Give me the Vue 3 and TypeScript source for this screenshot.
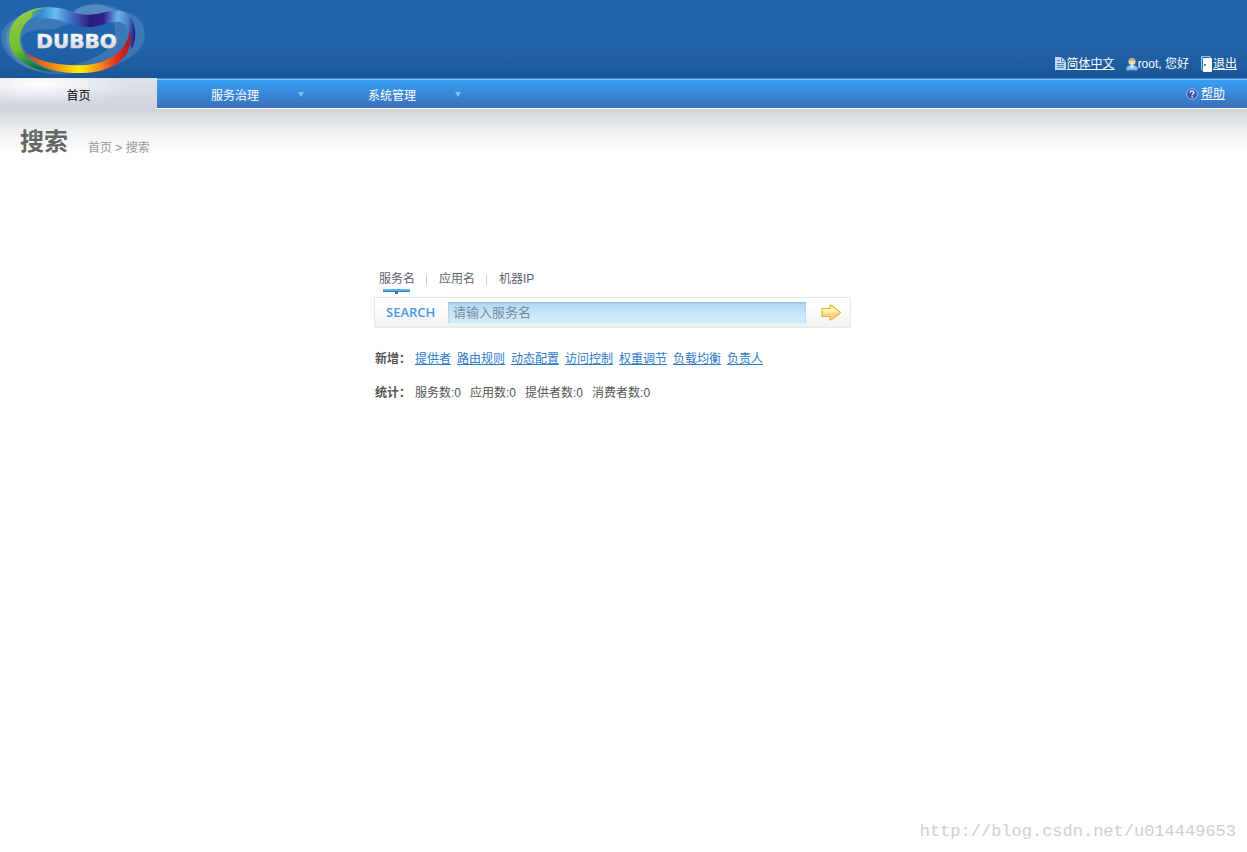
<script setup lang="ts">
import { computed, ref } from 'vue'

interface SearchTab {
  key: string
  label: string
}

const tabs: SearchTab[] = [
  { key: 'service', label: '服务名' },
  { key: 'application', label: '应用名' },
  { key: 'address', label: '机器IP' },
]
const activeTab = ref<string>('service')
const keyword = ref<string>('')
const placeholder = computed(() => '请输入' + (tabs.find((t) => t.key === activeTab.value)?.label ?? ''))

const menus: string[] = ['服务治理', '系统管理']
const addLinks: string[] = ['提供者', '路由规则', '动态配置', '访问控制', '权重调节', '负载均衡', '负责人']
const stats = [
  { label: '服务数', value: 0 },
  { label: '应用数', value: 0 },
  { label: '提供者数', value: 0 },
  { label: '消费者数', value: 0 },
]
</script>

<template>
  <div class="page">
    <header class="banner">
      <a class="logo" href="#" aria-label="DUBBO">
        <svg viewBox="0 0 450 234" width="150" height="78">
          <defs>
            <linearGradient id="green" x1="0.2" y1="0" x2="0.5" y2="1">
              <stop offset="0" stop-color="#a5d884" />
              <stop offset="0.2" stop-color="#86c843" />
              <stop offset="0.6" stop-color="#72bf2c" />
              <stop offset="0.82" stop-color="#2c9140" />
              <stop offset="1" stop-color="#0b6a35" />
            </linearGradient>
            <linearGradient id="blue" gradientUnits="userSpaceOnUse" x1="85" y1="40" x2="406" y2="70">
              <stop offset="0" stop-color="#1c78b8" stop-opacity="0.2" />
              <stop offset="0.12" stop-color="#2e8fd0" />
              <stop offset="0.25" stop-color="#6cbcf0" />
              <stop offset="0.4" stop-color="#3b6fc4" />
              <stop offset="0.58" stop-color="#2b1c80" />
              <stop offset="0.7" stop-color="#2b2388" />
              <stop offset="0.83" stop-color="#68b4ec" />
              <stop offset="0.93" stop-color="#4a82cf" />
              <stop offset="1" stop-color="#2a1c86" />
            </linearGradient>
            <linearGradient id="warm" gradientUnits="userSpaceOnUse" x1="68" y1="0" x2="396" y2="0">
              <stop offset="0" stop-color="#c63a1e" />
              <stop offset="0.15" stop-color="#d8641c" />
              <stop offset="0.32" stop-color="#f29a12" />
              <stop offset="0.52" stop-color="#fff000" />
              <stop offset="0.7" stop-color="#f4901a" />
              <stop offset="0.86" stop-color="#e0301c" />
              <stop offset="1" stop-color="#a81420" />
            </linearGradient>
            <linearGradient id="steel" x1="0" y1="0" x2="0" y2="1">
              <stop offset="0.2" stop-color="#ffffff" />
              <stop offset="1" stop-color="#c4c6c8" />
            </linearGradient>
          </defs>
          <g fill="#b4cfe6" fill-opacity="0.2" fill-rule="evenodd">
            <path d="M110 28 C45 45 2 80 3 112 C5 175 85 225 180 222 C330 222 434 170 434 105 C434 65 410 40 365 32 C330 10 250 2 215 40 C180 28 140 22 110 28 Z M85 60 C110 45 165 50 205 58 C240 65 290 55 340 48 C380 48 400 65 401 105 C400 165 310 199 225 198 C125 195 38 168 30 112 C28 88 55 70 85 60 Z" />
            <path d="M90 40 C40 55 20 80 18 110 C18 170 70 212 140 213 C110 198 70 160 65 120 C65 85 130 90 165 87 C220 65 280 40 320 42 C350 60 350 110 340 130 C320 160 260 188 210 196 L250 205 C330 190 390 155 388 105 C386 55 350 22 300 14 C255 10 230 20 215 42 C180 55 130 32 90 40 Z" />
          </g>
          <path fill="url(#green)" d="M155 22 C85 17 27 55 27 115 C27 170 85 212 160 216 C105 199 60 165 60 120 C60 78 85 49 140 36 Z" />
          <path fill="url(#blue)" d="M96 36 C125 20 165 16 200 30 C235 45 265 48 300 40 C330 32 350 30 366 33 C392 41 407 72 406 105 C405 124 401 137 395 147 C388 127 389 111 386 99 C382 76 368 63 343 66 C310 72 290 82 260 81 C208 80 185 56 143 55 C112 54 90 63 77 77 C82 66 88 58 94 52 Z" />
          <path fill="url(#warm)" d="M68 145 C95 181 165 196 235 196 C320 195 380 158 389 92 C402 145 372 213 252 219 C160 222 102 200 68 145 Z" />
          <text x="109" y="145" font-family="DejaVu Sans, sans-serif" font-weight="700" font-size="60" fill="url(#steel)" stroke="#dfe3e6" stroke-width="2">DUBBO</text>
        </svg>
      </a>
      <div class="account">
        <span class="item">
          <svg width="12" height="14" viewBox="0 0 12 14">
            <path d="M0 0h6.500L11 4.500V13H0z" fill="#c3d8f0" />
            <path d="M6.500 .5v4H10.500" fill="none" stroke="#5d8ccb" />
            <path d="M2 3.500h3M2 6.500h7M2 8.500h7M2 10.500h7" stroke="#5683c4" />
          </svg>
          <a href="#">简体中文</a>
        </span>
        <span class="item">
          <svg width="12" height="14" viewBox="0 0 12 14">
            <path d="M.5 13c0-4 2-4.500 5.500-4.500s5.500.5 5.500 4.500z" fill="#8fcaf2" stroke="#5b9fd6" />
            <path d="M4 8.500L6 11l2-2.500z" fill="#fff" />
            <circle cx="6" cy="4.500" r="3.500" fill="#eddcb4" />
            <path d="M2.500 4.500c0-5 7-5 7 0C8 3 4.500 3 2.500 4.500z" fill="#b9a888" />
          </svg>
          <span>root, 您好</span>
        </span>
        <span class="item">
          <svg width="13" height="16" viewBox="0 0 13 16">
            <path d="M1.500 13.500V.5h8.500v2" fill="none" stroke="#8fc4f5" />
            <path d="M1.500 1l2 2v12l-2-2z" fill="#2b78c4" stroke="#8fc4f5" />
            <rect x="3" y="2" width="9" height="14" rx="1" fill="#fff" />
            <rect x="4" y="8" width="2" height="2" fill="#4d86c4" />
          </svg>
          <a href="#">退出</a>
        </span>
      </div>
    </header>

    <nav class="menu">
      <a class="home" href="#">首页</a>
      <a v-for="menu in menus" :key="menu" class="entry" href="#">
        {{ menu }}<span class="caret"></span>
      </a>
      <div class="help">
        <svg width="12" height="12" viewBox="0 0 12 12">
          <circle cx="6" cy="6" r="5.400" fill="#3553ae" stroke="#a9b6d8" />
          <path d="M4.200 4.700c0-2.500 3.800-2.300 3.700-.2C7.900 5.800 6.100 5.700 6.100 7.300" fill="none" stroke="#fff" stroke-width="1.300" />
          <rect x="5.400" y="8.200" width="1.400" height="1.400" fill="#fff" />
        </svg>
        <a href="#">帮助</a>
      </div>
    </nav>

    <div class="heading">
      <h1>搜索</h1>
      <div class="crumbs"><a href="#">首页</a> &gt; 搜索</div>
    </div>

    <main class="search">
      <div class="tabs">
        <button
          v-for="tab in tabs"
          :key="tab.key"
          type="button"
          :class="{ active: tab.key === activeTab }"
          @click="activeTab = tab.key"
        >
          {{ tab.label }}
        </button>
      </div>
      <form class="bar" @submit.prevent>
        <label for="keyword">SEARCH</label>
        <input id="keyword" v-model="keyword" type="text" :placeholder="placeholder" />
        <button type="submit" aria-label="搜索">
          <svg width="21" height="17" viewBox="0 0 21 17">
            <defs>
              <linearGradient id="gold" x1="0" y1="0" x2="0" y2="1">
                <stop offset="0" stop-color="#ffee80" />
                <stop offset="0.35" stop-color="#fffbae" />
                <stop offset="0.65" stop-color="#ffd08a" />
                <stop offset="1" stop-color="#ffe070" />
              </linearGradient>
            </defs>
            <path d="M1 4.500h8V1.300h1.500L19.500 8.500l-9 7.200H9v-3.200H1z" fill="url(#gold)" stroke="#e2b43c" stroke-width="1.200" />
          </svg>
        </button>
      </form>
      <div class="row">
        <strong>新增：</strong>
        <a v-for="link in addLinks" :key="link" href="#">{{ link }}</a>
      </div>
      <div class="row stats">
        <strong>统计：</strong>
        <span v-for="stat in stats" :key="stat.label">{{ stat.label }}:{{ stat.value }}</span>
      </div>
    </main>

    <footer>http://blog.csdn.net/u014449653</footer>
  </div>
</template>

<style>
body {
  margin: 0;
  background: #fff;
}
</style>

<style scoped>
.page {
  min-height: 100vh;
  display: flex;
  flex-direction: column;
  font: 12px/16px "Liberation Sans", "Noto Sans CJK SC", sans-serif;
  color: #555;
}
.banner {
  height: 78px;
  display: flex;
  justify-content: space-between;
  align-items: flex-end;
  background: linear-gradient(#2164ac 55%, #1b5798);
}
.logo,
.logo svg {
  display: block;
}
.account {
  display: flex;
  gap: 11px;
  padding: 0 10px 6px 0;
  color: #fff;
}
.account a,
.help a {
  color: #fff;
}
.item {
  display: flex;
  align-items: center;
  white-space: nowrap;
}
.menu {
  height: 30px;
  display: flex;
  background: linear-gradient(#2e8fe6 1px, #7cc2fa 1px, #7cc2fa 2px, #389ff4 2px, #3a70b9);
  border-bottom: 1px solid #fff;
}
.home {
  width: 157px;
  height: 31px;
  box-sizing: border-box;
  padding-top: 10px;
  text-align: center;
  text-decoration: none;
  color: #000;
  background: radial-gradient(ellipse at 25% 20%, #fff, rgba(255, 255, 255, 0) 55%), linear-gradient(#dde1e8, #d1d5de);
}
.entry {
  width: 157px;
  box-sizing: border-box;
  padding: 10px 0 0 54px;
  display: flex;
  gap: 39px;
  color: #fff;
  text-decoration: none;
}
.caret {
  width: 0;
  height: 0;
  margin-top: 4px;
  border: 3px solid transparent;
  border-top: 5px solid #86c4f8;
  border-bottom: 0;
}
.help {
  display: flex;
  align-items: center;
  gap: 3px;
  margin-left: auto;
  padding: 2px 22px 0 0;
}
.heading {
  height: 46px;
  display: flex;
  padding-left: 20px;
  gap: 20px;
  background: linear-gradient(#d0d4da, #eceef0 45%, #fff 95%);
}
h1 {
  margin: 17px 0 0;
  font-size: 24px;
  line-height: 32px;
  font-weight: 700;
  color: #666;
}
.crumbs {
  padding-top: 31px;
  color: #999;
}
.crumbs a {
  color: #999;
  text-decoration: none;
}
.search {
  width: 477px;
  max-width: 100%;
  margin: 116px auto 0;
  padding-right: 22px;
}
.tabs {
  display: flex;
  height: 26px;
}
.tabs button {
  position: relative;
  display: flex;
  margin: 0;
  padding: 0 11px 0 13px;
  border: 0;
  background: none;
  font: inherit;
  color: #5a6470;
}
.tabs button:first-child {
  padding-left: 5px;
}
.tabs button + button::before {
  content: "";
  position: absolute;
  left: 0;
  top: 4px;
  width: 1px;
  height: 10px;
  background: #ccc;
}
.tabs .active::after {
  content: "";
  position: absolute;
  left: 9px;
  top: 18px;
  width: 27px;
  height: 5px;
  background:
    linear-gradient(#2a7fc4, #2a7fc4) 50% 100% / 3px 2px no-repeat,
    linear-gradient(#5cb0f4 2px, #2a7fc4 2px) 0 0 / 100% 3px no-repeat;
}
.bar {
  height: 31px;
  box-sizing: border-box;
  display: flex;
  align-items: center;
  border: 1px solid #e6e8eb;
  background: linear-gradient(#fff 30%, #f0f0f0);
}
.bar label {
  width: 73px;
  box-sizing: border-box;
  padding: 0 0 2px 11px;
  font: 600 13px/16px "Open Sans", sans-serif;
  color: #4699ea;
}
.bar input {
  flex: 1;
  min-width: 0;
  height: 21px;
  box-sizing: border-box;
  padding: 0 5px;
  border: 0;
  border-radius: 0;
  outline: 0;
  font: 13px/21px "Liberation Sans", "Noto Sans CJK SC", sans-serif;
  color: #555;
  background: linear-gradient(#b2d7f5, #ccecfd 75%);
  box-shadow: inset 0 1px 2px #8fb6d8;
}
.bar input::placeholder {
  color: #7b8b9b;
  opacity: 1;
}
.bar button {
  width: 44px;
  padding: 0 0 0 7px;
  border: 0;
  background: none;
  display: flex;
  justify-content: center;
}
.row {
  display: flex;
  gap: 6px;
  margin: 23px 0 0 1px;
  white-space: nowrap;
}
.row strong {
  width: 34px;
}
.row a {
  color: #2e7bc9;
}
.stats {
  gap: 9px;
  margin-top: 18px;
}
.stats strong {
  width: 31px;
}
footer {
  margin-top: auto;
  padding: 0 11px 8px 0;
  text-align: right;
  font: 17px/24px "Liberation Mono", monospace;
  color: #d0d0cb;
}
</style>
